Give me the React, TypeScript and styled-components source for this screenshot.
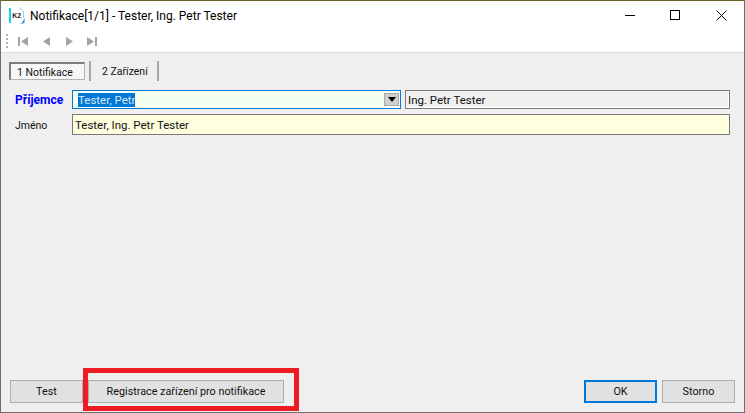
import React from 'react'
import styled, { createGlobalStyle } from 'styled-components'

const GlobalStyle = createGlobalStyle`
  html, body {
    margin: 0;
    padding: 0;
    background: #efefef;
  }
`

const Window = styled.div`
  position: relative;
  width: 745px;
  height: 413px;
  box-sizing: border-box;
  display: flex;
  flex-direction: column;
  background: #efefef;
  border-top: 1px solid #6b6428;
  border-left: 1px solid #6e6e6e;
  border-right: 1px solid #6e6e6e;
  border-bottom: 1px solid #6e6e6e;
  font-family: Roboto, "Noto Sans", sans-serif;
  font-size: 11.5px;
  color: #111;
`

const TitleBar = styled.div`
  height: 29px;
  display: flex;
  align-items: center;
  background: #fff;
  padding-left: 8px;
`

const Title = styled.div`
  margin-left: 4px;
  font-size: 12px;
  white-space: nowrap;
  color: #000;
`

const WindowButtons = styled.div`
  margin-left: auto;
  display: flex;
  align-items: center;
`

const WindowButton = styled.div`
  width: 46px;
  height: 29px;
  display: flex;
  align-items: center;
  justify-content: center;
`

const Toolbar = styled.div`
  height: 22px;
  display: flex;
  align-items: center;
  background: #fff;
  border-bottom: 1px solid #dcdcdc;
  padding-left: 5px;
`

const Grip = styled.div`
  width: 2px;
  height: 15px;
  margin-right: 10px;
  background: repeating-linear-gradient(to bottom, #b5b5b5 0 2px, transparent 2px 4px);
`

const NavButton = styled.div`
  width: 23px;
  height: 16px;
  display: flex;
  align-items: center;
`

const Tabs = styled.div`
  display: flex;
  align-items: flex-start;
  height: 20px;
  margin: 8px 0 0 8px;
  font-size: 10.5px;
`

const ActiveTab = styled.div`
  box-sizing: border-box;
  width: 76px;
  height: 18px;
  margin-top: 1px;
  padding: 1px 0 0 6px;
  display: flex;
  align-items: center;
  white-space: nowrap;
  border-style: solid;
  border-width: 2px 1px 1px 2px;
  border-color: #7d7d7d #b4b4b4 #b4b4b4 #7d7d7d;
  background: repeating-conic-gradient(#ffffff 0 25%, #efefef 0 50%) 0 0 / 2px 2px;
`

const Tab = styled.div`
  box-sizing: border-box;
  width: 68px;
  height: 20px;
  padding-left: 11px;
  display: flex;
  align-items: center;
  white-space: nowrap;
  border-right: 2px solid #a8a8a8;
`

const TabDivider = styled.div`
  width: 2px;
  height: 20px;
  margin-left: 4px;
  background: #a8a8a8;
`

const Form = styled.div`
  display: flex;
  flex-direction: column;
  gap: 5px;
  margin: 9px 14px 0 14px;
`

const Row = styled.div`
  display: flex;
  align-items: center;
  gap: 4px;
`

const Label = styled.div<{ $required?: boolean }>`
  width: 53px;
  flex: none;
  font-weight: ${p => (p.$required ? 700 : 400)};
  color: ${p => (p.$required ? '#0000ff' : '#111')};
  font-size: ${p => (p.$required ? '12px' : '10.5px')};
  padding-top: ${p => (p.$required ? 0 : 2)}px;
`

const ComboBox = styled.div`
  box-sizing: border-box;
  width: 329px;
  height: 19px;
  flex: none;
  display: flex;
  align-items: center;
  justify-content: space-between;
  border: 1px solid #0078d7;
  background: #f4fff0;
  padding: 0 1px 0 5px;
`

const Selected = styled.span`
  background: #0078d7;
  color: #d8e8f4;
  line-height: 14px;
`

const DropButton = styled.div`
  box-sizing: border-box;
  width: 15px;
  height: 13px;
  display: flex;
  align-items: center;
  justify-content: center;
  background: #cfcfcf;
  border: 1px solid #a8a8a8;
`

const ReadOnlyField = styled.div`
  box-sizing: border-box;
  height: 19px;
  flex: 1;
  display: flex;
  align-items: center;
  padding-left: 2px;
  border: 1px solid #7a7a7a;
  box-shadow: inset -1px -1px 0 #fff;
  background: #efefef;
`

const NameField = styled.div`
  box-sizing: border-box;
  height: 21px;
  flex: 1;
  display: flex;
  align-items: center;
  padding-left: 2px;
  border: 1px solid #7a7a7a;
  background: #ffffe0;
`

const Footer = styled.div`
  margin: auto 9px 9px 9px;
  display: flex;
  align-items: center;
  gap: 5px;
  font-size: 10.8px;
`

const Button = styled.div<{ $width: number; $primary?: boolean }>`
  box-sizing: border-box;
  width: ${p => p.$width}px;
  height: 23px;
  display: flex;
  align-items: center;
  justify-content: center;
  background: #e1e1e1;
  border: ${p => (p.$primary ? '2px solid #0078d7' : '1px solid #adadad')};
  color: #111;
`

const Spacer = styled.div`
  flex: 1;
`

const Highlight = styled.div`
  position: absolute;
  left: 82px;
  top: 367px;
  width: 216px;
  height: 43px;
  box-sizing: border-box;
  border: 5px solid #ed1c24;
  pointer-events: none;
`

function AppIcon() {
  return (
    <svg width="17" height="18" viewBox="0 0 17 18">
      <rect x="0" y="1" width="2" height="15" fill="#19d3e6" />
      <path d="M10 0.5 L14.5 4 V11" fill="none" stroke="#8fd8ea" strokeWidth="1" />
      <path d="M11 17 Q15 15 15.5 10 V16 Z" fill="#1e88d0" />
      <rect x="3" y="5" width="11" height="7" fill="#fff" />
      <text x="3.2" y="11" fontSize="7" fontWeight="700" fontFamily="Liberation Sans, sans-serif" fill="#222">K2</text>
    </svg>
  )
}

function NavIcon({ kind }: { kind: 'first' | 'prev' | 'next' | 'last' }) {
  const shapes = {
    first: <><rect x="0" y="1" width="2" height="9" /><path d="M10 1 V10 L3 5.5 Z" /></>,
    prev: <path d="M9 1 V10 L2 5.5 Z" />,
    next: <path d="M2 1 V10 L9 5.5 Z" />,
    last: <><path d="M0 1 V10 L7 5.5 Z" /><rect x="8" y="1" width="2" height="9" /></>,
  }
  return (
    <svg width="10" height="11" viewBox="0 0 10 11" fill="#a3a3a3">
      {shapes[kind]}
    </svg>
  )
}

export default function App() {
  return (
    <>
      <GlobalStyle />
      <Window>
        <TitleBar>
          <AppIcon />
          <Title>Notifikace[1/1] - Tester, Ing. Petr Tester</Title>
          <WindowButtons>
            <WindowButton>
              <svg width="11" height="11" viewBox="0 0 11 11">
                <path d="M1 5.5 H11" stroke="#000" strokeWidth="1" />
              </svg>
            </WindowButton>
            <WindowButton>
              <svg width="11" height="11" viewBox="0 0 11 11">
                <rect x="0.5" y="0.5" width="9" height="9" fill="none" stroke="#000" strokeWidth="1" />
              </svg>
            </WindowButton>
            <WindowButton>
              <svg width="11" height="11" viewBox="0 0 11 11">
                <path d="M0.5 0.5 L10.5 10.5 M10.5 0.5 L0.5 10.5" stroke="#000" strokeWidth="1" />
              </svg>
            </WindowButton>
          </WindowButtons>
        </TitleBar>
        <Toolbar>
          <Grip />
          <NavButton><NavIcon kind="first" /></NavButton>
          <NavButton><NavIcon kind="prev" /></NavButton>
          <NavButton><NavIcon kind="next" /></NavButton>
          <NavButton><NavIcon kind="last" /></NavButton>
        </Toolbar>
        <Tabs>
          <ActiveTab>1 Notifikace</ActiveTab>
          <TabDivider />
          <Tab>2 Zařízení</Tab>
        </Tabs>
        <Form>
          <Row>
            <Label $required>Příjemce</Label>
            <ComboBox>
              <Selected>Tester, Petr</Selected>
              <DropButton>
                <svg width="8" height="5" viewBox="0 0 8 5"><path d="M0 0 H8 L4 5 Z" fill="#000" /></svg>
              </DropButton>
            </ComboBox>
            <ReadOnlyField>Ing. Petr Tester</ReadOnlyField>
          </Row>
          <Row>
            <Label>Jméno</Label>
            <NameField>Tester, Ing. Petr Tester</NameField>
          </Row>
        </Form>
        <Footer>
          <Button $width={73}>Test</Button>
          <Button $width={196}>Registrace zařízení pro notifikace</Button>
          <Spacer />
          <Button $width={73} $primary>OK</Button>
          <Button $width={73}>Storno</Button>
        </Footer>
        <Highlight />
      </Window>
    </>
  )
}
